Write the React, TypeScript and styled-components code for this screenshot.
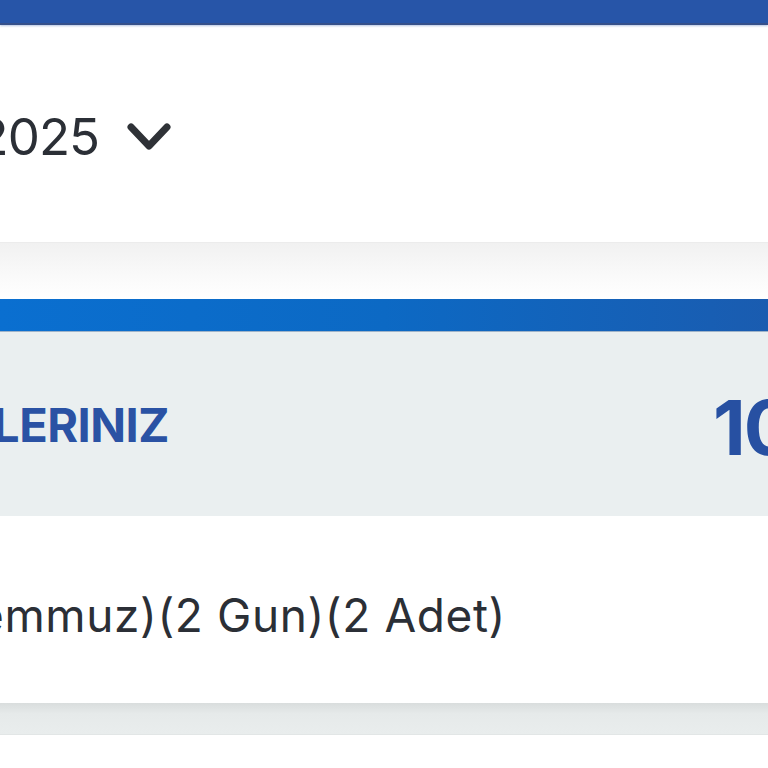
import React from "react";
import styled, { createGlobalStyle } from "styled-components";

const GlobalStyle = createGlobalStyle`
  html, body {
    margin: 0;
    padding: 0;
    background: #ffffff;
    overflow: hidden;
  }
  body {
    font-family: Inter, "Noto Sans", Arial, sans-serif;
    color: #2b2f36;
  }
`;

const Page = styled.div`
  width: 768px;
  height: 768px;
  display: flex;
  flex-direction: column;
  overflow: hidden;
  background: #ffffff;
`;

const TopBar = styled.div`
  flex: 0 0 23px;
  background: #2755a8;
  border-bottom: 2px solid #36508a;
  box-shadow: 0 1px 2px rgba(39, 85, 168, 0.35);
`;

const FilterSection = styled.div`
  flex: 0 0 217px;
  display: flex;
  align-items: center;
  padding-top: 6px;
  box-sizing: border-box;
`;

// fixed-width box, text pinned to its right edge and clipped on the left
const Clip = styled.div<{ $width: number }>`
  width: ${(p) => p.$width}px;
  flex: 0 0 auto;
  display: flex;
  justify-content: flex-end;
  overflow: hidden;
  white-space: nowrap;
`;

const MonthText = styled.span`
  font-size: 51px;
  font-weight: 400;
  letter-spacing: -1px;
  color: #2b2f36;
`;

const Chevron = styled.svg`
  margin-left: 27px;
  width: 46px;
  height: 32px;
  flex: 0 0 auto;
`;

const Fade = styled.div`
  flex: 0 0 56px;
  border-top: 1px solid #ececec;
  background: linear-gradient(to bottom, #f1f1f1 0%, #fafafa 60%, #ffffff 100%);
`;

const Card = styled.div`
  display: flex;
  flex-direction: column;
`;

const CardStrip = styled.div`
  height: 32px;
  background: linear-gradient(to right, #0a6fd0 0%, #0c69c4 50%, #1a5cb0 100%);
  border-bottom: 1px solid #9fb3c8;
`;

const SummaryRow = styled.div`
  height: 184px;
  background: #eaeff0;
  display: flex;
  align-items: center;
  justify-content: space-between;
`;

const SummaryTitle = styled.span`
  font-size: 47px;
  font-weight: 700;
  letter-spacing: -0.5px;
  color: #2a52a4;
`;

const CountClip = styled.div`
  width: 55px;
  overflow: hidden;
  white-space: nowrap;
  padding-top: 6px;
`;

const Count = styled.span`
  font-size: 76px;
  font-weight: 700;
  letter-spacing: -2px;
  color: #2750a2;
`;

const ItemRow = styled.div`
  height: 187px;
  background: #ffffff;
  display: flex;
  align-items: center;
  padding-top: 10px;
  box-sizing: border-box;
`;

const ItemText = styled.span`
  font-size: 46px;
  font-weight: 400;
  letter-spacing: 0.6px;
  color: #2b2f36;
`;

const CardFooter = styled.div`
  height: 31px;
  background: linear-gradient(to bottom, #d9dddd 0%, #e6eaea 35%, #e9eded 100%);
  border-bottom: 1px solid #e2e6e6;
`;

export default function App() {
  return (
    <>
      <GlobalStyle />
      <Page>
        <TopBar />
        <FilterSection>
          <Clip $width={99}>
            <MonthText>Temmuz 2025</MonthText>
          </Clip>
          <Chevron viewBox="0 0 46 32" fill="none">
            <polyline
              points="5,6 23,25 41,6"
              stroke="#2f3237"
              strokeWidth="7"
              strokeLinecap="round"
              strokeLinejoin="round"
            />
          </Chevron>
        </FilterSection>
        <Fade />
        <Card>
          <CardStrip />
          <SummaryRow>
            <Clip $width={169}>
              <SummaryTitle>İZİN GÜNLERINIZ</SummaryTitle>
            </Clip>
            <CountClip>
              <Count>10</Count>
            </CountClip>
          </SummaryRow>
          <ItemRow>
            <Clip $width={506}>
              <ItemText>Yıllık İzin (01-02 Temmuz)(2 Gun)(2 Adet)</ItemText>
            </Clip>
          </ItemRow>
          <CardFooter />
        </Card>
      </Page>
    </>
  );
}
